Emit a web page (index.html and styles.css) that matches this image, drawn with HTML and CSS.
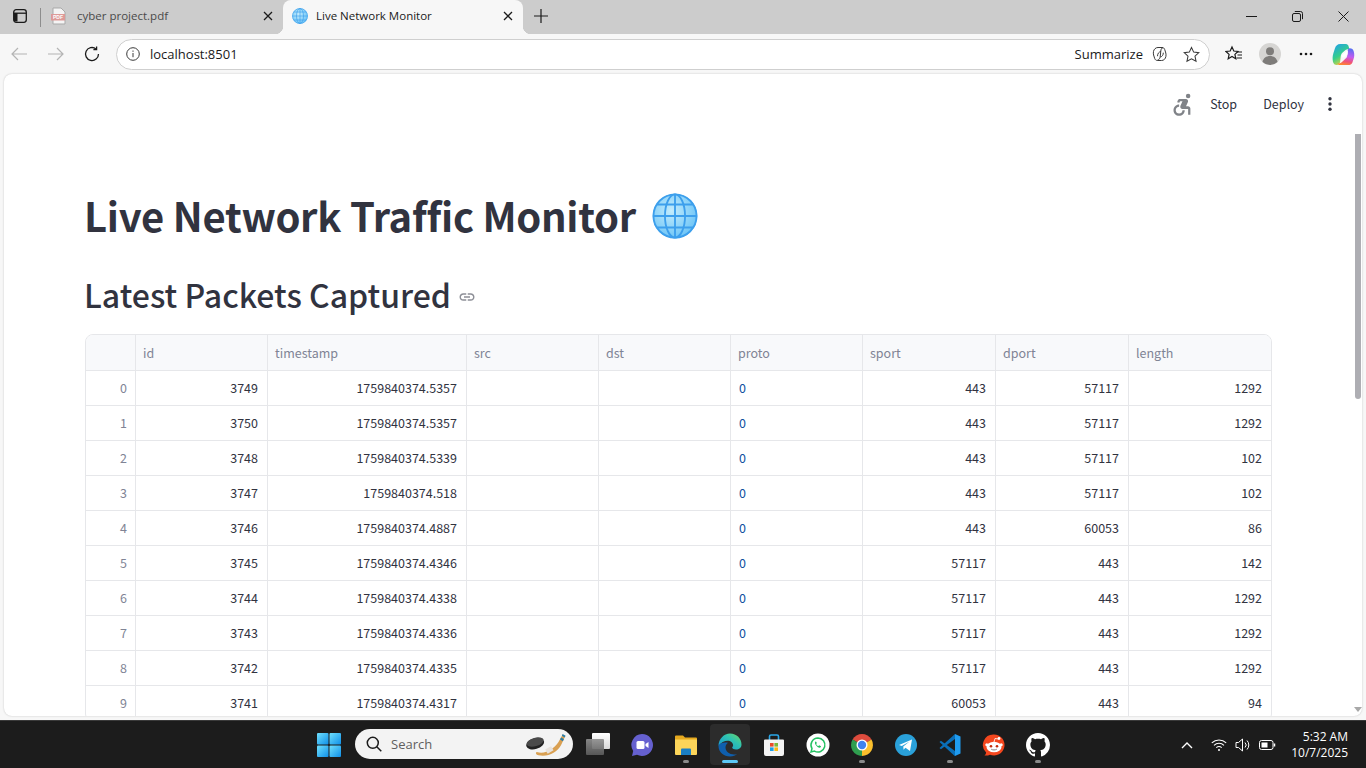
FILE: index.html
```html
<!DOCTYPE html>
<html lang="en">
<head>
    <meta charset="UTF-8">
    <meta name="viewport" content="width=device-width, initial-scale=1.0">
    <title>Live Network Monitor</title>
    <link rel="stylesheet" href="styles.css">
</head>
<body>
    <svg class="defs" aria-hidden="true">
        <defs>
            <radialGradient id="globeFill" cx="0.42" cy="0.38" r="0.7">
                <stop offset="0" stop-color="#c4ecfc"/>
                <stop offset="1" stop-color="#63c0f6"/>
            </radialGradient>
            <linearGradient id="winFill" x1="0" y1="0" x2="1" y2="1">
                <stop offset="0" stop-color="#6fe0fd"/>
                <stop offset="1" stop-color="#0f8fe8"/>
            </linearGradient>
            <linearGradient id="edgeTop" x1="0" y1="1" x2="1" y2="0">
                <stop offset="0" stop-color="#1490d8"/>
                <stop offset="0.6" stop-color="#2fc3b0"/>
                <stop offset="1" stop-color="#6fd864"/>
            </linearGradient>
            <linearGradient id="copilotA" x1="0" y1="0" x2="0.5" y2="1">
                <stop offset="0" stop-color="#1f9df0"/>
                <stop offset="0.6" stop-color="#36cf8a"/>
                <stop offset="1" stop-color="#e6d23c"/>
            </linearGradient>
            <linearGradient id="copilotB" x1="0.5" y1="0" x2="0.3" y2="1">
                <stop offset="0" stop-color="#5b6ef2"/>
                <stop offset="0.45" stop-color="#c35cf0"/>
                <stop offset="0.75" stop-color="#f0527a"/>
                <stop offset="1" stop-color="#ff8a2a"/>
            </linearGradient>
            <linearGradient id="taskBack" x1="0" y1="0" x2="0" y2="1">
                <stop offset="0" stop-color="#ffffff"/>
                <stop offset="1" stop-color="#d8d8d8"/>
            </linearGradient>
            <linearGradient id="taskFront" x1="0" y1="0" x2="0" y2="1">
                <stop offset="0" stop-color="#8f8f8f"/>
                <stop offset="1" stop-color="#5c5c5c"/>
            </linearGradient>
            <symbol id="globe" viewBox="0 0 32 32">
                <circle cx="16" cy="16" r="15.5" fill="url(#globeFill)"/>
                <g fill="none" stroke="#3d9fec" stroke-width="1.300">
                    <circle cx="16" cy="16" r="15"/>
                    <ellipse cx="16" cy="16" rx="7" ry="15"/>
                    <path d="M16 1v30M1 16h30M3.500 8h25M3.500 24h25"/>
                </g>
            </symbol>
            <symbol id="copilotColor" viewBox="0 0 24 24">
                <path d="M8.500 1h6c1.600 0 2.400 1 2.800 2.400l1 3.600c-1.500-.8-3-.5-4.200.4l-3 2.600c-1.200 1-1.800 2.400-2 4l-.6 5.500c-.3 2-1.500 3.500-3.500 3.500-2 0-3.600-1.400-4-3.500C.4 16.500.5 13.500 1.500 10.500l1.500-4.800C4 2.600 5.800 1 8.500 1z" fill="url(#copilotA)"/>
                <path d="M18.500 5.500c2.300 0 3.600 1.200 4.200 3.300.8 2.800.7 5.600-.3 8.200l-1.200 3.500c-.7 1.800-2.300 2.500-4.200 2.500H8.500c-1.500 0-2.300-.6-2.800-1.600 2 .2 3.700-.5 5-1.800l3.800-3.600c1-1 1.400-2 1.500-3.500l.4-4.600c.1-1.300.9-2.400 2.100-2.400z" fill="url(#copilotB)"/>
                <path d="M15 8.500l-3.500 3c-1 .8-1.300 2-1.400 3.300 1.400.6 2.800.3 4-.7l1.700-1.700c.5-.5.7-1.100.7-1.800l.1-2.600c-.5 0-1 .2-1.600.5z" fill="#fff" opacity=".9"/>
            </symbol>
        </defs>
    </svg>

    <div class="tabstrip">
        <button class="strip-btn">
            <svg width="16" height="16" viewBox="0 0 16 16" fill="none" stroke="#1a1a1a" stroke-width="1.300"><rect x="1.700" y="1.700" width="12.600" height="12.600" rx="2.500"/><path d="M1.700 5.200h12.600"/><path d="M2 5v8.500h3.500V5z" fill="#1a1a1a" stroke="none"/></svg>
        </button>
        <span class="tab-divider"></span>
        <div class="tab">
            <svg class="tab-icon" width="16" height="18" viewBox="0 0 16 18"><path d="M2 1h8l4 4v12H2z" fill="#f4f4f4" stroke="#a9a9a9"/><rect x="0" y="7" width="14" height="6.500" fill="#dd9a98"/><text x="7" y="12.300" class="pdf-label">PDF</text></svg>
            <span class="tab-title">cyber project.pdf</span>
            <svg class="tab-close" width="10" height="10" viewBox="0 0 10 10"><path d="M1 1l8 8M9 1L1 9" stroke="#1a1a1a" stroke-width="1.300"/></svg>
        </div>
        <div class="tab tab-active">
            <svg class="tab-icon" width="16" height="16"><use href="#globe"/></svg>
            <span class="tab-title">Live Network Monitor</span>
            <svg class="tab-close" width="10" height="10" viewBox="0 0 10 10"><path d="M1 1l8 8M9 1L1 9" stroke="#1a1a1a" stroke-width="1.300"/></svg>
        </div>
        <button class="strip-btn new-tab">
            <svg width="14" height="14" viewBox="0 0 14 14"><path d="M7 0v14M0 7h14" stroke="#1a1a1a" stroke-width="1.200"/></svg>
        </button>
        <div class="win-controls">
            <button class="win-btn"><svg width="11" height="11" viewBox="0 0 11 11"><path d="M0 5.500h11" stroke="#1a1a1a"/></svg></button>
            <button class="win-btn"><svg width="11" height="11" viewBox="0 0 11 11" fill="none" stroke="#1a1a1a"><rect x=".5" y="2.500" width="8" height="8" rx="1.500"/><path d="M2.800.5h5.700a2 2 0 0 1 2 2v5.700"/></svg></button>
            <button class="win-btn"><svg width="11" height="11" viewBox="0 0 11 11"><path d="M.5.5l10 10M10.500.5l-10 10" stroke="#1a1a1a"/></svg></button>
        </div>
    </div>

    <div class="toolbar">
        <button class="tool-btn"><svg width="16" height="14" viewBox="0 0 16 14" fill="none" stroke="#b4b4b4" stroke-width="1.200"><path d="M16 7H1M7 1L1 7l6 6"/></svg></button>
        <button class="tool-btn"><svg width="16" height="14" viewBox="0 0 16 14" fill="none" stroke="#b4b4b4" stroke-width="1.200"><path d="M0 7h15M9 1l6 6-6 6"/></svg></button>
        <button class="tool-btn"><svg width="16" height="16" viewBox="0 0 16 16" fill="none" stroke="#1a1a1a" stroke-width="1.300"><path d="M14.500 8A6.500 6.500 0 1 1 12 2.900"/><path d="M12.600.5v3.200H9.400"/></svg></button>
        <div class="address">
            <svg class="info-icon" width="14" height="14" viewBox="0 0 14 14" fill="none" stroke="#3a3a3a"><circle cx="7" cy="7" r="6.300"/><path d="M7 6v4.200M7 3.500v1.300"/></svg>
            <span class="url">localhost:8501</span>
            <span class="summarize">Summarize</span>
            <svg class="summarize-icon" width="16" height="16" viewBox="0 0 16 16" fill="none" stroke="#3a3a3a" stroke-width="1"><path d="M6 1.500h4c1.500 0 2.300.8 2.700 2l1.100 3.500c.6 2.500 0 5-1.300 6.300-.8.800-1.800 1.200-3 1.200H5.500c-1.500 0-2.400-.8-2.800-2L1.600 9c-.6-2.500-.1-5 1.400-6.300C3.800 1.900 4.800 1.500 6 1.500z"/><path d="M11 1.700C9.500 2 9 3.200 8.800 5L8.300 10c-.2 2-1 3.700-3 4.300"/><path d="M8.800 5.500C6.800 6 5.500 7.600 5.500 10.200M8.300 11c2-.5 3-2 3-4.300"/></svg>
            <svg class="star-icon" width="17" height="17" viewBox="0 0 18 18" fill="none" stroke="#3a3a3a" stroke-width="1.100"><path d="M9 1.500l2.300 5 5.400.6-4 3.700 1.100 5.400L9 13.500l-4.800 2.700 1.100-5.400-4-3.700 5.400-.6z"/></svg>
        </div>
        <div class="tool-right">
            <button class="tool-btn"><svg width="18" height="18" viewBox="0 0 18 18" fill="none" stroke="#1a1a1a" stroke-width="1.200"><path d="M7 2l1.800 4 4.200.5-3.100 2.900.9 4.300L7 11.500l-3.800 2.200.9-4.300L1 6.500 5.200 6z"/><path d="M12 7h5M12.500 10h4.500M11.500 13H17"/></svg></button>
            <button class="tool-btn"><svg width="22" height="22" viewBox="0 0 22 22"><circle cx="11" cy="11" r="11" fill="#d6d5d3"/><circle cx="11" cy="8.300" r="4" fill="#7e7c7a"/><path d="M3.500 19c.8-4 3.700-6 7.500-6s6.700 2 7.500 6a11 11 0 0 1-15 0z" fill="#7e7c7a"/></svg></button>
            <button class="tool-btn"><svg width="14" height="4" viewBox="0 0 14 4" fill="#1a1a1a"><circle cx="2" cy="2" r="1.300"/><circle cx="7" cy="2" r="1.300"/><circle cx="12" cy="2" r="1.300"/></svg></button>
            <button class="tool-btn"><svg width="23" height="23"><use href="#copilotColor"/></svg></button>
        </div>
    </div>

    <div class="viewport">
        <div class="app">
            <header class="app-header">
                <svg class="run-icon" width="27" height="27" viewBox="0 0 24 24" fill="#808388"><circle cx="17" cy="4.540" r="2"/><path d="M14 17h-2c0 1.650-1.350 3-3 3s-3-1.350-3-3 1.350-3 3-3v-2c-2.760 0-5 2.240-5 5s2.240 5 5 5 5-2.240 5-5zm3-3.500h-1.860l1.670-3.670C17.420 8.500 16.440 7 14.960 7h-5.200c-.81 0-1.540.47-1.870 1.200L7.220 10l1.920.53L9.790 9H12l-1.830 4.100c-.6 1.330.39 2.900 1.850 2.900H17v5h2v-5.500c0-1.100-.9-2-2-2z"/></svg>
                <span class="app-action">Stop</span>
                <span class="app-action">Deploy</span>
                <svg class="kebab" width="18" height="18" viewBox="0 0 18 18" fill="#31333f"><circle cx="9" cy="3.800" r="1.700"/><circle cx="9" cy="9" r="1.700"/><circle cx="9" cy="14.200" r="1.700"/></svg>
            </header>
            <main class="app-main">
                <h1 class="page-title">Live Network Traffic Monitor<svg class="title-globe" width="46" height="46"><use href="#globe"/></svg></h1>
                <h2 class="section-title">Latest Packets Captured<svg class="link-icon" width="18" height="18" viewBox="0 0 24 24" fill="#8d8f97"><path d="M3.900 12c0-1.710 1.390-3.100 3.100-3.100h4V7H7c-2.760 0-5 2.240-5 5s2.240 5 5 5h4v-1.900H7c-1.710 0-3.100-1.390-3.100-3.100zM8 13h8v-2H8v2zm9-6h-4v1.900h4c1.710 0 3.100 1.390 3.100 3.100s-1.390 3.100-3.100 3.100h-4V17h4c2.760 0 5-2.240 5-5s-2.240-5-5-5z"/></svg></h2>
                <div class="table-wrap">
                    <table class="packets">
                        <colgroup>
                            <col class="c-idx"><col class="c-id"><col class="c-ts"><col class="c-addr"><col class="c-addr"><col class="c-addr"><col class="c-port"><col class="c-port"><col class="c-len">
                        </colgroup>
                        <thead>
                            <tr><th></th><th>id</th><th>timestamp</th><th>src</th><th>dst</th><th>proto</th><th>sport</th><th>dport</th><th>length</th></tr>
                        </thead>
                        <tbody>
                            <tr><td class="idx">0</td><td>3749</td><td>1759840374.5357</td><td></td><td></td><td class="proto">0</td><td>443</td><td>57117</td><td>1292</td></tr>
                            <tr><td class="idx">1</td><td>3750</td><td>1759840374.5357</td><td></td><td></td><td class="proto">0</td><td>443</td><td>57117</td><td>1292</td></tr>
                            <tr><td class="idx">2</td><td>3748</td><td>1759840374.5339</td><td></td><td></td><td class="proto">0</td><td>443</td><td>57117</td><td>102</td></tr>
                            <tr><td class="idx">3</td><td>3747</td><td>1759840374.518</td><td></td><td></td><td class="proto">0</td><td>443</td><td>57117</td><td>102</td></tr>
                            <tr><td class="idx">4</td><td>3746</td><td>1759840374.4887</td><td></td><td></td><td class="proto">0</td><td>443</td><td>60053</td><td>86</td></tr>
                            <tr><td class="idx">5</td><td>3745</td><td>1759840374.4346</td><td></td><td></td><td class="proto">0</td><td>57117</td><td>443</td><td>142</td></tr>
                            <tr><td class="idx">6</td><td>3744</td><td>1759840374.4338</td><td></td><td></td><td class="proto">0</td><td>57117</td><td>443</td><td>1292</td></tr>
                            <tr><td class="idx">7</td><td>3743</td><td>1759840374.4336</td><td></td><td></td><td class="proto">0</td><td>57117</td><td>443</td><td>1292</td></tr>
                            <tr><td class="idx">8</td><td>3742</td><td>1759840374.4335</td><td></td><td></td><td class="proto">0</td><td>57117</td><td>443</td><td>1292</td></tr>
                            <tr><td class="idx">9</td><td>3741</td><td>1759840374.4317</td><td></td><td></td><td class="proto">0</td><td>60053</td><td>443</td><td>94</td></tr>
                        </tbody>
                    </table>
                </div>
            </main>
        </div>
        <div class="scrollbar">
            <div class="scroll-thumb"></div>
            <div class="scroll-arrow"></div>
        </div>
    </div>

    <footer class="taskbar">
        <div class="task-start">
            <svg width="24" height="24" viewBox="0 0 24 24" fill="url(#winFill)"><rect x="0" y="0" width="11.500" height="11.500" rx="1"/><rect x="12.500" y="0" width="11.500" height="11.500" rx="1"/><rect x="0" y="12.500" width="11.500" height="11.500" rx="1"/><rect x="12.500" y="12.500" width="11.500" height="11.500" rx="1"/></svg>
        </div>
        <div class="task-search">
            <svg width="16" height="16" viewBox="0 0 16 16" fill="none" stroke="#1c1c1c" stroke-width="1.500"><circle cx="6.800" cy="6.800" r="5.500"/><path d="M10.800 10.800l4.500 4.500"/></svg>
            <span class="search-text">Search</span>
            <svg class="search-art" width="42" height="25" viewBox="0 0 50 30">
                <path d="M14 24c10 3 20-3 26-12l5-9 3 2-5 11c-5 9-15 14-27 12-3-.500-4-3-2-4z" fill="#d9a052"/>
                <path d="M24 21l7-4 3 5-7 4z" fill="#e8e2dc"/>
                <path d="M43 6.500l3.500 2-1.200 2.500-3.500-2zM45 2.500l3.500 2-1 2-3.500-2z" fill="#2a7fa8"/>
                <ellipse cx="12" cy="14" rx="11" ry="6.500" transform="rotate(-16 12 14)" fill="#222"/>
                <ellipse cx="12" cy="12" rx="10.500" ry="5" transform="rotate(-16 12 12)" fill="#4a4a4a"/>
            </svg>
        </div>
        <div class="task-item">
            <svg width="24" height="24" viewBox="0 0 24 24"><rect x="6" y="0" width="18" height="16" rx="1" fill="url(#taskBack)"/><rect x="0" y="6" width="18" height="16" rx="1" fill="url(#taskFront)" opacity=".92"/></svg>
            <span class="task-pill task-pill-off"></span>
        </div>
        <div class="task-item">
            <svg width="24" height="24" viewBox="0 0 24 24"><path d="M12 1a11 11 0 1 1-5 20.800L2 23l1.200-5A11 11 0 0 1 12 1z" fill="#6560cf"/><rect x="6.500" y="8" width="8" height="8" rx="1.500" fill="#fff"/><path d="M15.500 11l3-2v6l-3-2z" fill="#fff"/></svg>
            <span class="task-pill task-pill-off"></span>
        </div>
        <div class="task-item">
            <svg width="24" height="24" viewBox="0 0 24 24"><path d="M1 3.500a1 1 0 0 1 1-1h7l2 2h11a1 1 0 0 1 1 1V8H1z" fill="#e6a91f"/><path d="M1 6.500h22V21a1 1 0 0 1-1 1H2a1 1 0 0 1-1-1z" fill="#fcd55a"/><path d="M7 16.500a1 1 0 0 1 1-1h8a1 1 0 0 1 1 1V22H7z" fill="#1a7fc4"/></svg>
            <span class="task-pill"></span>
        </div>
        <div class="task-item task-active">
            <svg width="24" height="24" viewBox="0 0 24 24"><path d="M.5 13C.5 6 6 .5 12 .5c6.800 0 11.500 5 11.500 11 0 3.200-2.500 5-5.500 5-2.200 0-3.800-.8-3.800-2 0-.6.900-1 .900-2.300 0-2.500-2.600-4.400-5.400-4.400C6.400 7.800 2.800 9.500.5 13z" fill="url(#edgeTop)"/><path d="M.5 13c0 6.200 5.200 10.500 11.500 10.500 3 0 5.300-.9 7.300-2.500-1 .4-2 .5-3.300.5-4.500 0-8.500-3-8.500-7 0-2 1-3.700 2.500-4.700C6.500 9.300 2 9.500.5 13z" fill="#0f5fae"/></svg>
            <span class="task-pill task-pill-on"></span>
        </div>
        <div class="task-item">
            <svg width="24" height="24" viewBox="0 0 24 24"><path d="M7.500 7V3.500a1.500 1.500 0 0 1 1.500-1.500h6a1.500 1.500 0 0 1 1.500 1.500V7" fill="none" stroke="#2aa7e8" stroke-width="1.600"/><path d="M3 6.500h18a1 1 0 0 1 1 1V21a2 2 0 0 1-2 2H4a2 2 0 0 1-2-2V7.500a1 1 0 0 1 1-1z" fill="#f3f3f3"/><rect x="8" y="10" width="3.600" height="3.600" fill="#ea4b2a"/><rect x="12.400" y="10" width="3.600" height="3.600" fill="#7cb93a"/><rect x="8" y="14.400" width="3.600" height="3.600" fill="#1b9fe8"/><rect x="12.400" y="14.400" width="3.600" height="3.600" fill="#fdb813"/></svg>
            <span class="task-pill task-pill-off"></span>
        </div>
        <div class="task-item">
            <svg width="24" height="24" viewBox="0 0 24 24"><circle cx="12" cy="12" r="11.500" fill="#fff"/><path d="M12 5a7 7 0 0 0-6 10.600L5 19l3.500-.9A7 7 0 1 0 12 5z" fill="none" stroke="#25c162" stroke-width="1.500"/><path d="M9.600 8.600c-.9.600-.9 2 .2 3.500 1.200 1.700 2.900 2.900 4 2.600.7-.2 1.400-.9 1.200-1.400l-1.800-1-.8.800c-.8-.2-1.900-1.300-2.200-2.200l.7-.8-.9-1.700z" fill="#25c162"/></svg>
            <span class="task-pill task-pill-off"></span>
        </div>
        <div class="task-item">
            <svg width="24" height="24" viewBox="0 0 24 24"><path d="M12 12L2.500 6.500A11 11 0 0 1 21.500 6.500z" fill="#dd4b3d"/><path d="M12 12L21.500 6.500A11 11 0 0 1 12 23z" fill="#fbc02d"/><path d="M12 12V23A11 11 0 0 1 2.500 6.500z" fill="#2f9e4f"/><circle cx="12" cy="12" r="5.500" fill="#fff"/><circle cx="12" cy="12" r="4.200" fill="#3f82ee"/></svg>
            <span class="task-pill"></span>
        </div>
        <div class="task-item">
            <svg width="24" height="24" viewBox="0 0 24 24"><circle cx="12" cy="12" r="11" fill="#2aa1da"/><path d="M5 12l13-5.500L16 18l-4.500-3.200-2 2-.2-3.200 6.200-5.100L7.800 13z" fill="#fff"/></svg>
            <span class="task-pill task-pill-off"></span>
        </div>
        <div class="task-item">
            <svg width="24" height="24" viewBox="0 0 24 24"><path d="M17 1L1.500 15l1.400 1.300L17 6z" fill="#0a6fb8"/><path d="M2.900 7.700L17 18v5.200L1.500 9z" fill="#0a6fb8"/><path d="M17 1l5.500 2.600v16.800L17 23z" fill="#1f9cf0"/></svg>
            <span class="task-pill"></span>
        </div>
        <div class="task-item">
            <svg width="24" height="24" viewBox="0 0 24 24"><path d="M12 1.500a10.500 10.500 0 1 1-4 20.200c-1.700.8-3.500 1-5.500.8 1-.8 1.500-1.800 1.600-3A10.500 10.500 0 0 1 12 1.500z" fill="#f4471e"/><ellipse cx="12" cy="14" rx="7.500" ry="5.300" fill="#fff"/><circle cx="4.800" cy="11.800" r="1.500" fill="#fff"/><circle cx="19.200" cy="11.800" r="1.500" fill="#fff"/><circle cx="17" cy="5.500" r="1.400" fill="#fff"/><path d="M12 9l1-3.500 3.500.5" fill="none" stroke="#fff" stroke-width=".8"/><circle cx="9" cy="13.200" r="1.300" fill="#c42c0a"/><circle cx="15" cy="13.200" r="1.300" fill="#c42c0a"/><path d="M9.200 16.200c1.700 1 3.900 1 5.600 0" fill="none" stroke="#777" stroke-width=".9"/></svg>
            <span class="task-pill task-pill-off"></span>
        </div>
        <div class="task-item">
            <svg width="24" height="24" viewBox="0 0 16 16" fill="#fff"><path d="M8 0C3.580 0 0 3.580 0 8c0 3.540 2.290 6.530 5.470 7.590.4.070.55-.17.55-.38 0-.19-.01-.82-.01-1.490-2.010.37-2.530-.49-2.690-.94-.09-.23-.48-.94-.82-1.130-.28-.15-.68-.52-.01-.53.63-.01 1.080.58 1.230.82.720 1.210 1.870.87 2.330.66.070-.52.280-.87.510-1.070-1.780-.2-3.640-.89-3.640-3.950 0-.87.310-1.590.820-2.150-.08-.2-.36-1.020.08-2.120 0 0 .67-.21 2.200.82.640-.18 1.320-.27 2-.27.680 0 1.360.09 2 .27 1.530-1.040 2.200-.82 2.200-.82.440 1.100.16 1.920.08 2.120.51.56.82 1.270.82 2.150 0 3.070-1.870 3.750-3.650 3.950.29.25.54.73.54 1.480 0 1.070-.01 1.930-.01 2.200 0 .21.150.46.550.38A8.013 8.013 0 0 0 16 8c0-4.420-3.580-8-8-8z"/></svg>
            <span class="task-pill"></span>
        </div>
        <div class="tray">
            <span class="tray-icon tray-chevron"><svg width="12" height="8" viewBox="0 0 12 8" fill="none" stroke="#fff" stroke-width="1.400"><path d="M1 7l5-5 5 5"/></svg></span>
            <span class="tray-icon"><svg width="16" height="14" viewBox="0 0 16 14" fill="none" stroke="#fff" stroke-width="1.100"><path d="M.8 4.800a10.500 10.500 0 0 1 14.400 0M3 7.300a7.300 7.300 0 0 1 10 0M5.300 9.700a4 4 0 0 1 5.400 0"/><circle cx="8" cy="12" r="1" fill="#fff" stroke="none"/></svg></span>
            <span class="tray-icon"><svg width="16" height="16" viewBox="0 0 16 16" fill="none" stroke="#fff" stroke-width="1"><path d="M1 5.500h2.500L7.500 2v12l-4-3.500H1z"/><path d="M10 5.500a3.500 3.500 0 0 1 0 5M12 3.500a6.500 6.500 0 0 1 0 9"/></svg></span>
            <span class="tray-icon"><svg width="17" height="12" viewBox="0 0 17 12" fill="none" stroke="#fff"><rect x=".5" y="1.500" width="13.500" height="9" rx="2"/><rect x="2.500" y="3.500" width="6" height="5" fill="#fff" stroke="none"/><path d="M15.500 4.500v3" stroke-width="1.500"/></svg></span>
            <div class="clock">
                <span>5:32 AM</span>
                <span>10/7/2025</span>
            </div>
        </div>
    </footer>
</body>
</html>
```

FILE: styles.css
```css
:root {
    --chrome-bar: #cccccc;
    --chrome-bg: #f7f7f7;
    --line: #e6e7ea;
    --ink: #31333f;
    --muted: #808495;
    --st-font: "Noto Sans CJK SC", "Noto Sans", sans-serif;
    --ui-font: "Open Sans", "Noto Sans", sans-serif;
}
* {
    box-sizing: border-box;
}
html, body {
    height: 100%;
}
body {
    margin: 0;
    height: 768px;
    overflow: hidden;
    display: flex;
    flex-direction: column;
    background: var(--chrome-bg);
    font-family: var(--ui-font);
    color: #1a1a1a;
}
button {
    border: 0;
    background: none;
    padding: 0;
    display: flex;
    align-items: center;
    justify-content: center;
}
.defs {
    position: absolute;
    width: 0;
    height: 0;
}

/* tab strip */
.tabstrip {
    height: 34px;
    flex: none;
    display: flex;
    align-items: stretch;
    background: var(--chrome-bar);
}
.strip-btn {
    width: 40px;
    padding-bottom: 2px;
}
.new-tab {
    width: 36px;
    padding-bottom: 3px;
}
.tab-divider {
    width: 1px;
    margin: 8px 1px 7px 0;
    background: #8d8d8d;
}
.tab {
    width: 241px;
    padding: 0 10px 2px 9px;
    display: flex;
    align-items: center;
    font-size: 11.5px;
    color: #4a4a4a;
}
.tab-icon {
    flex: none;
    margin-right: 10px;
}
.tab-title {
    flex: 1;
    padding-bottom: 2px;
    white-space: nowrap;
}
.tab-active {
    position: relative;
    width: 240px;
    color: #1a1a1a;
    background: var(--chrome-bg);
    border-radius: 8px 8px 0 0;
}
.tab-active .tab-icon {
    margin-right: 8px;
}
.tab-active::before,
.tab-active::after {
    content: "";
    position: absolute;
    bottom: 0;
    width: 8px;
    height: 8px;
}
.tab-active::before {
    left: -8px;
    background: radial-gradient(circle at 0 0, transparent 8px, var(--chrome-bg) 8.5px);
}
.tab-active::after {
    right: -8px;
    background: radial-gradient(circle at 100% 0, transparent 8px, var(--chrome-bg) 8.5px);
}
.pdf-label {
    font: 700 5px "Liberation Sans", sans-serif;
    fill: #ffffff;
    text-anchor: middle;
}
.win-controls {
    margin-left: auto;
    display: flex;
}
.win-btn {
    width: 46px;
    padding-bottom: 2px;
}

/* address bar row */
.toolbar {
    height: 40px;
    flex: none;
    display: flex;
    align-items: center;
    padding: 0 4px 0 1px;
    background: var(--chrome-bg);
}
.tool-btn {
    width: 36.5px;
    height: 32px;
    flex: none;
}
.address {
    flex: 1;
    height: 31px;
    margin-left: 5.5px;
    padding: 0 9px 0 9px;
    display: flex;
    align-items: center;
    background: #ffffff;
    border: 1px solid #cfcfcf;
    border-radius: 16px;
}
.info-icon {
    flex: none;
    margin-right: 10px;
}
.url {
    flex: 1;
    font-size: 13px;
    color: #1a1a1a;
}
.summarize {
    font-size: 13px;
    color: #1a1a1a;
}
.summarize-icon {
    margin-left: 9px;
}
.star-icon {
    margin-left: 15px;
}
.tool-right {
    display: flex;
    align-items: center;
    margin-left: 6px;
}
.tool-right .tool-btn {
    width: 36px;
}
.tool-right .tool-btn:last-child {
    width: 38px;
}

/* streamlit page */
.viewport {
    height: 642px;
    flex: none;
    margin: 0 4px;
    display: flex;
    background: #ffffff;
    border-radius: 8px;
    box-shadow: 0 0 2px rgba(0, 0, 0, 0.22);
    overflow: hidden;
}
.app {
    width: 1350px;
    flex: none;
    overflow: hidden;
    font-family: var(--st-font);
    color: var(--ink);
}
.app-header {
    height: 60px;
    padding-right: 15px;
    display: flex;
    align-items: center;
    justify-content: flex-end;
}
.run-icon {
    margin-right: 14px;
}
.app-action {
    margin-right: 26px;
    padding-bottom: 2px;
    font-size: 12.5px;
}
.app-action + .app-action {
    margin-right: 17px;
}
.app-main {
    padding: 0 82px 0 81px;
}
.page-title {
    margin: 55px 0 0 -1px;
    font-size: 40px;
    line-height: 53px;
    font-weight: 700;
    letter-spacing: -0.3px;
    display: flex;
    align-items: center;
    gap: 16px;
}
.title-globe {
    flex: none;
}
.section-title {
    margin: 31px 0 0 -1px;
    font-size: 32px;
    line-height: 43px;
    font-weight: 500;
    display: flex;
    align-items: center;
    gap: 7px;
}
.link-icon {
    flex: none;
    margin-top: 4px;
}
.table-wrap {
    margin-top: 18px;
    border: 1px solid var(--line);
    border-radius: 8px;
    overflow: hidden;
}
.packets {
    width: 100%;
    table-layout: fixed;
    border-collapse: separate;
    border-spacing: 0;
    font-size: 12.5px;
}
.c-idx { width: 50px; }
.c-id { width: 132px; }
.c-ts { width: 199px; }
.c-addr { width: 132px; }
.c-port { width: 133px; }
.packets th,
.packets td {
    padding: 0 8px 0 7px;
    border-right: 1px solid var(--line);
    border-bottom: 1px solid var(--line);
    white-space: nowrap;
    overflow: hidden;
}
.packets th:last-child,
.packets td:last-child {
    border-right: 0;
}
.packets th {
    height: 36px;
    text-align: left;
    font-weight: 400;
    color: var(--muted);
    background: #f8f9fb;
}
.packets td {
    height: 35px;
    padding-right: 9px;
    padding-bottom: 2px;
    text-align: right;
}
.packets .idx {
    padding-right: 8px;
    color: var(--muted);
}
.packets .proto {
    padding-left: 8px;
    text-align: left;
    color: #0d4f9e;
}

.scrollbar {
    flex: 1;
    display: flex;
    flex-direction: column;
    align-items: center;
    padding-top: 60px;
    padding-bottom: 4px;
}
.scroll-thumb {
    width: 6px;
    height: 265px;
    background: #aeaeb3;
    border-radius: 0 0 3px 3px;
}
.scroll-arrow {
    margin-top: auto;
    width: 0;
    height: 0;
    border-left: 4px solid transparent;
    border-right: 4px solid transparent;
    border-top: 5px solid #a8a8a8;
}

/* windows taskbar */
.taskbar {
    margin-top: auto;
    height: 48px;
    flex: none;
    display: flex;
    padding-left: 307px;
    background: #1c1c1c;
    border-top: 1px solid #3a3a3a;
}
.task-start {
    width: 44px;
    display: flex;
    align-items: center;
    justify-content: center;
}
.task-search {
    width: 218px;
    height: 30px;
    margin: 8px 3px 0 4px;
    padding: 0 6px 0 11px;
    display: flex;
    align-items: center;
    background: #f3f3f3;
    border-radius: 15px;
}
.search-text {
    flex: 1;
    margin-left: 9px;
    font-size: 13px;
    color: #5f5f5f;
}
.task-item {
    width: 44px;
    padding-top: 12px;
    display: flex;
    flex-direction: column;
    align-items: center;
}
.task-active {
    position: relative;
}
.task-active::before {
    content: "";
    position: absolute;
    left: 2px;
    right: 2px;
    top: 3px;
    bottom: 3px;
    background: #2c2c2c;
    border-radius: 4px;
}
.task-active svg,
.task-active .task-pill {
    position: relative;
}
.task-pill {
    width: 6px;
    height: 3px;
    margin-top: 3px;
    background: #8b8b8b;
    border-radius: 2px;
}
.task-pill-off {
    background: transparent;
}
.task-pill-on {
    width: 16px;
    background: #5cc8f7;
}
.tray {
    margin-left: auto;
    padding-right: 18px;
    display: flex;
    align-items: center;
}
.tray-icon {
    width: 24px;
    display: flex;
    align-items: center;
    justify-content: center;
}
.tray-chevron {
    margin-right: 8px;
}
.clock {
    width: 57px;
    margin-left: 12px;
    display: flex;
    flex-direction: column;
    align-items: flex-end;
    font-size: 12px;
    line-height: 16px;
    color: #ffffff;
}
```
